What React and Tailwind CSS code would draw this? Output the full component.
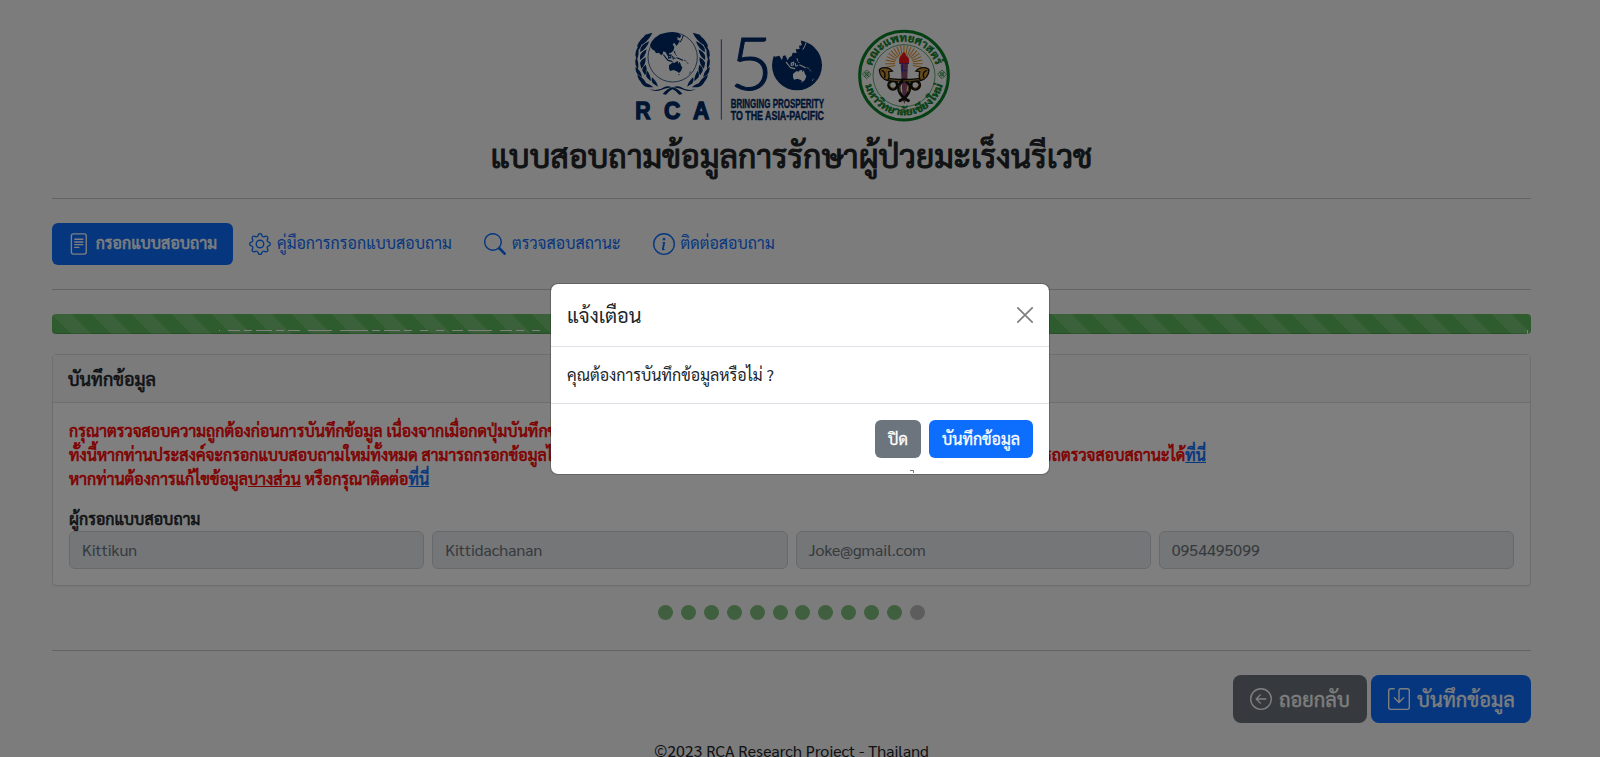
import React from "react";
import {
  BsFileText,
  BsGear,
  BsSearch,
  BsInfoCircle,
  BsArrowLeftCircle,
  BsSave,
} from "react-icons/bs";

const NAVY = "#002a66";
const GREEN = "#0a7e28";
const PAGE = "#f9f9f9";

const ASIA =
  "M90 76 L94 66 L104 54 L120 43 L138 38 L158 36 L176 40 L184 48 L179 55 L172 50 L173 60 L180 62 L174 72 L169 78 L164 69 L158 72 L163 82 L160 92 L152 99 L147 99 L149 106 L143 108 L137 97 L130 94 L128 102 L124 106 L116 98 L108 100 L104 92 L96 88 Z";
const AUSTRALIA =
  "M147 136 L153 131 L158 127 L164 129 L167 125 L174 124 L175 131 L179 125 L183 136 L187 143 L183 153 L177 159 L170 154 L161 150 L150 153 L147 146 Z";

function Islands({ color }) {
  return (
    <g stroke={color} fill="none" strokeWidth="3.5" strokeLinecap="round">
      <path d="M131 105 L142 119 M144 121 L156 124 M146 107 L153 105 L152 113 L146 114 Z" />
      <path d="M158 109 L160 117 M164 114 L165 115 M171 113 L180 117 L188 121" />
      <path d="M163 94 L165 100 M167 104 L169 106 M181 66 L187 55 L190 46" strokeWidth="3" />
      <path d="M193 121 L198 123 M201 127 L204 131 M209 160 L212 155 M176 164 L178 164" strokeWidth="2" />
    </g>
  );
}

function WreathSide() {
  return (
    <g fill={NAVY}>
      <path d="M97 38 L76 44 Q66 54 62 70 L66 74 Q88 60 97 38 Z" />
      <path d="M72 50 Q60 58 52 76 L54 92 Q66 78 72 50 Z M55 78 Q46 92 46 106 L51 120 Q58 102 55 78 Z M49 110 Q43 124 47 136 L54 148 Q58 130 49 110 Z M47 140 Q45 154 54 164 L66 171 Q64 154 47 140 Z M52 164 Q54 180 66 188 L80 192 Q72 174 52 164 Z M62 186 Q70 200 84 202 L100 202 Q86 188 62 186 Z" />
      <path d="M88 64 Q70 70 62 84 L60 96 Q78 90 88 64 Z M80 88 Q64 96 60 108 L60 120 Q76 112 80 88 Z M77 112 Q62 120 60 130 L64 146 Q78 134 77 112 Z M77 134 Q66 142 67 152 L75 166 Q84 152 77 134 Z M82 152 Q76 164 80 172 L92 184 Q94 168 82 152 Z M96 172 Q92 182 98 190 L114 200 Q110 184 96 172 Z" />
      <path d="M87 206 Q112 216 132 202 Q142 196 156 202 Q134 205 121 211 Q104 217 87 206 Z" />
      <path d="M128 222 Q141 205 158 202 L160 206 Q146 212 138 224 Z" />
    </g>
  );
}

function RcaLogo() {
  return (
    <svg className="h-[110px] w-[220px]" viewBox="0 0 660 330" aria-hidden="true">
      <WreathSide />
      <g transform="translate(315.5 0) scale(-1 1)">
        <WreathSide />
      </g>
      <circle cx="158" cy="112" r="74" fill="none" stroke={NAVY} strokeWidth="2.2" />
      <path d={ASIA} fill={NAVY} />
      <path d={AUSTRALIA} fill={NAVY} />
      <Islands color={NAVY} />
      <g fill={NAVY} stroke={NAVY} strokeWidth="4" fontSize="73" className="font-['Liberation_Sans',sans-serif] font-bold">
        <text x="46" y="298" textLength="46" lengthAdjust="spacingAndGlyphs">R</text>
        <text x="132" y="298" textLength="49" lengthAdjust="spacingAndGlyphs">C</text>
        <text x="219" y="298" textLength="49" lengthAdjust="spacingAndGlyphs">A</text>
      </g>
      <path d="M304 58 V299" stroke={NAVY} strokeWidth="2.4" />
      <text x="329" y="209" fill={NAVY} stroke={NAVY} strokeWidth="3" fontSize="216" textLength="130" lengthAdjust="spacingAndGlyphs" className="font-['Lato',sans-serif] font-light">5</text>
      <circle cx="531" cy="136" r="75" fill={NAVY} />
      <path d="M454 104 L466 110 L478 107 L486 121 L489 108 L496 106 L503 121 L508 112 L515 108 L518 98 L530 99 L527 88 L539 87 L537 77 L546 76 L542 60 L450 48 Z" fill={PAGE} />
      <path d="M545 66 l8 8 M543 78 l8 3 M524 103 l6 2" stroke={NAVY} strokeWidth="6" />
      <g transform="translate(372 26)">
        <path d={AUSTRALIA} fill={PAGE} />
        <g transform="translate(-4 -4)">
          <Islands color={PAGE} />
        </g>
      </g>
      <g fill={NAVY} stroke={NAVY} strokeWidth="1.2" fontSize="36" className="font-['Liberation_Sans_Narrow','Liberation_Sans',sans-serif] font-bold">
        <text x="332" y="263" textLength="280" lengthAdjust="spacingAndGlyphs">BRINGING PROSPERITY</text>
        <text x="332" y="299" textLength="280" lengthAdjust="spacingAndGlyphs">TO THE ASIA-PACIFIC</text>
      </g>
    </svg>
  );
}

const rays = Array.from({ length: 19 }, (_, i) => 170 + i * 11.11);

function Snake() {
  return (
    <g fill="none" strokeLinecap="round">
      <path d="M138 176 Q160 182 192 180 Q212 188 208 212 Q202 232 180 242" stroke="#15120c" strokeWidth="9" />
      <circle cx="159" cy="195" r="13" stroke="#15120c" strokeWidth="9" />
      <path d="M148 179 Q180 183 194 183 M205 198 L205 214 M148 192 Q150 204 160 206" stroke="#c79a3c" strokeWidth="2.5" />
      <path d="M118 150 Q122 142 136 143 Q148 143 157 153 L146 155 Q150 168 144 182 Q120 176 118 150 Z" fill="#c79033" stroke="#15120c" strokeWidth="4" />
      <path d="M126 152 Q138 156 134 172" stroke="#15120c" strokeWidth="4" />
    </g>
  );
}

function Emblem({ x }) {
  return (
    <g transform={`translate(${x} 163)`} fill="none" stroke={GREEN} strokeWidth="2">
      <path d="M0 -13 L13 0 L0 13 L-13 0 Z M-8 -8 L8 8 M8 -8 L-8 8" />
      <circle r="5" />
    </g>
  );
}

function FacultySeal() {
  return (
    <svg className="h-[110px] w-[130px]" viewBox="0 0 390 330" aria-hidden="true">
      <defs>
        <path id="sealTop" d="M93 164 A99 99 0 0 1 291 164" />
        <path id="sealBottom" d="M72 166 A120 120 0 0 0 312 166" />
      </defs>
      <circle cx="192" cy="167" r="133" fill="none" stroke={GREEN} strokeWidth="9" />
      <circle cx="192" cy="167" r="93" fill="none" stroke={GREEN} strokeWidth="2" />
      <g fill={GREEN} stroke={GREEN} strokeWidth="1" className="font-['Sarabun','Noto_Sans_Thai',sans-serif] font-bold">
        <text fontSize="33">
          <textPath href="#sealTop" startOffset="26" textLength="256" lengthAdjust="spacingAndGlyphs">คณะแพทยศาสตร์</textPath>
        </text>
        <text fontSize="31">
          <textPath href="#sealBottom" startOffset="30" textLength="318" lengthAdjust="spacingAndGlyphs">มหาวิทยาลัยเชียงใหม่</textPath>
        </text>
      </g>
      <Emblem x={80} />
      <Emblem x={306} />
      <g stroke="#e08a20" strokeWidth="3">
        {rays.map((a) => (
          <path key={a} d="M27 0 H56" transform={`translate(192 132) rotate(${a})`} />
        ))}
      </g>
      <path d="M182 132 H204 L199 238 L193 252 L188 238 Z" fill="#8a4a6a" />
      <path d="M178 130 H207 M184 152 H201 M187 134 V150" stroke="#3a30b0" strokeWidth="4" />
      <Snake />
      <g transform="translate(385 0) scale(-1 1)">
        <Snake />
      </g>
      <path d="M178 130 Q174 112 185 106 Q187 99 192 96 Q197 101 199 107 Q211 114 206 130 Z" fill="#f01414" />
    </svg>
  );
}

function Rule() {
  return <hr className="border-t border-[#c8c9ca]" />;
}

const tabs = [
  { icon: BsGear, label: "คู่มือการกรอกแบบสอบถาม" },
  { icon: BsSearch, label: "ตรวจสอบสถานะ" },
  { icon: BsInfoCircle, label: "ติดต่อสอบถาม" },
];

const fields = ["Kittikun", "Kittidachanan", "Joke@gmail.com", "0954495099"];

const dashes = [
  [219, 1], [228, 12], [244, 8], [256, 16], [276, 8], [288, 12], [308, 24],
  [340, 28], [372, 8], [384, 16], [404, 8], [420, 8], [436, 8], [452, 11],
  [468, 24], [500, 12], [516, 8], [532, 8],
];

function Progress() {
  return (
    <div className="relative mt-6 h-5 rounded bg-[#5cb85c] bg-[linear-gradient(45deg,rgba(255,255,255,.15)_25%,transparent_25%,transparent_50%,rgba(255,255,255,.15)_50%,rgba(255,255,255,.15)_75%,transparent_75%,transparent)] bg-[length:40px_40px] shadow-[inset_0_-1px_0_rgba(0,0,0,.15)]">
      <svg className="absolute inset-0 h-5 w-full">
        {dashes.map(([x, w]) => (
          <rect key={x} x={x - 52} y="16" width={w} height="1" fill="#fff" />
        ))}
        <rect x="1475" y="16" width="1" height="4" fill="#fff" />
      </svg>
    </div>
  );
}

function Modal() {
  return (
    <div className="absolute inset-0 flex items-start justify-center bg-black/50 pt-[283px]">
      <div className="relative w-[500px] rounded-lg border border-black/20 bg-white bg-clip-padding">
        <header className="flex h-[63px] items-center justify-between border-b border-[#dee2e6] px-4">
          <h5 className="text-[20px] leading-[30px]">แจ้งเตือน</h5>
          <svg className="h-4 w-4" viewBox="0 0 16 16" fill="none" stroke="#7f7f7f" strokeWidth="1.7" strokeLinecap="round">
            <path d="M.8 .8 L15.2 15.2 M15.2 .8 L.8 15.2" />
          </svg>
        </header>
        <p className="p-4 leading-6">คุณต้องการบันทึกข้อมูลหรือไม่ ?</p>
        <footer className="flex h-[71px] items-center justify-end gap-2 border-t border-[#dee2e6] px-4 text-white [-webkit-text-stroke:0.3px]">
          <button className="h-[38px] w-[46px] rounded-md bg-[#6c757d]">ปิด</button>
          <button className="h-[38px] w-[104px] rounded-md bg-[#0d6efd]">บันทึกข้อมูล</button>
        </footer>
        <svg className="absolute bottom-[1px] left-[359px] h-[3px] w-[5px]">
          <path d="M0 .5 H3.5 V3" fill="none" stroke="#777" />
        </svg>
      </div>
    </div>
  );
}

export default function App() {
  return (
    <div className="relative h-[757px] w-[1600px] overflow-hidden bg-[#f9f9f9] font-['Sarabun','Noto_Sans_Thai','Noto_Sans',sans-serif] text-[16px] text-[#212529]">
      <div className="ml-[52px] w-[1479px]">
        <div className="flex justify-center pt-5 pl-[7px]">
          <RcaLogo />
          <FacultySeal />
        </div>
        <h1 className="h-[68px] pt-[6px] text-center text-[32px] leading-[38px] [-webkit-text-stroke:1px]">
          แบบสอบถามข้อมูลการรักษาผู้ป่วยมะเร็งนรีเวช
        </h1>
        <Rule />
        <nav className="mt-6 flex h-[42px]">
          <a className="flex w-[181px] items-center gap-[6px] rounded-md bg-[#0d6efd] px-4 text-white [-webkit-text-stroke:0.5px]">
            <BsFileText size={22} strokeWidth={0} />
            <span className="pb-[2px] whitespace-nowrap">กรอกแบบสอบถาม</span>
          </a>
          {tabs.map(({ icon: Icon, label }) => (
            <a key={label} className="flex items-center gap-[6px] px-4 text-[#0d6efd]">
              <Icon size={22} />
              <span className="pb-[2px]">{label}</span>
            </a>
          ))}
        </nav>
        <div className="h-6" />
        <Rule />
        <Progress />
        <section className="mt-5 h-[232px] rounded border border-[#dcdcdc] bg-white shadow-[0_1px_1px_rgba(0,0,0,.05)]">
          <h4 className="flex h-[48px] items-center border-b border-[#dcdcdc] bg-[#f7f7f7] px-[15px] text-[18px] [-webkit-text-stroke:0.6px]">
            บันทึกข้อมูล
          </h4>
          <div className="px-4 pt-4">
            <div className="leading-6 whitespace-nowrap text-[#ff0000] [-webkit-text-stroke:0.6px]">
              <p>กรุณาตรวจสอบความถูกต้องก่อนการบันทึกข้อมูล เนื่องจากเมื่อกดปุ่มบันทึกข้อมูลแล้วจะไม่สามารถแก้ไขได้</p>
              <p className="flex w-[1137px] justify-between">
                <span>ทั้งนี้หากท่านประสงค์จะกรอกแบบสอบถามใหม่ทั้งหมด สามารถกรอกข้อมูลได้อีกครั้ง</span>
                <span>
                  และสามารถตรวจสอบสถานะได้<a className="text-[#0d6efd] underline">ที่นี่</a>
                </span>
              </p>
              <p>
                หากท่านต้องการแก้ไขข้อมูล<u>บางส่วน</u> หรือกรุณาติดต่อ
                <a className="text-[#0d6efd] underline">ที่นี่</a>
              </p>
            </div>
            <p className="mt-4 leading-6 [-webkit-text-stroke:0.6px]">ผู้กรอกแบบสอบถาม</p>
            <div className="grid grid-cols-4 gap-2">
              {fields.map((f) => (
                <div key={f} className="flex h-[38px] items-center rounded-md border border-[#ced4da] bg-[#e9ecef] px-3 text-[#6c757d]">
                  {f}
                </div>
              ))}
            </div>
          </div>
        </section>
        <div className="mt-[19px] flex justify-center gap-[7.9px]">
          {Array.from({ length: 12 }, (_, i) => (
            <span key={i} className={i < 11 ? "size-[15px] rounded-full bg-[#7ebf7e]" : "size-[15px] rounded-full bg-[#bbbbbb]"} />
          ))}
        </div>
        <div className="h-[30px]" />
        <Rule />
        <div className="mt-6 flex justify-end gap-1 text-[20px] text-white [-webkit-text-stroke:0.3px]">
          <button className="flex h-12 w-[134px] items-center gap-[7px] rounded-lg bg-[#6c757d] pl-[17px] whitespace-nowrap">
            <BsArrowLeftCircle size={22} strokeWidth={0} />
            ถอยกลับ
          </button>
          <button className="flex h-12 w-[160px] items-center gap-[7px] rounded-lg bg-[#0d6efd] pl-[17px] whitespace-nowrap">
            <BsSave size={22} strokeWidth={0} />
            บันทึกข้อมูล
          </button>
        </div>
        <p className="mt-4 text-center leading-6">©2023 RCA Research Project - Thailand</p>
      </div>
      <Modal />
    </div>
  );
}
